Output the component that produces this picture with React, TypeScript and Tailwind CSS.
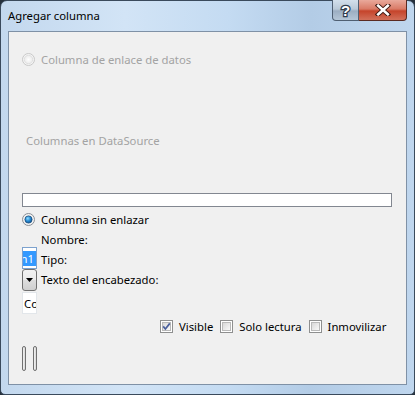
import React from "react";

const font = { fontFamily: '"Segoe UI", "Noto Sans", "Open Sans", sans-serif' };

function RadioDisabled() {
  return (
    <svg width="13" height="13" viewBox="0 0 13 13" className="shrink-0">
      <defs>
        <radialGradient id="rd" cx="0.5" cy="0.5" r="0.6">
          <stop offset="0" stopColor="#ffffff" />
          <stop offset="1" stopColor="#e6e6e6" />
        </radialGradient>
      </defs>
      <circle cx="6.5" cy="6.5" r="6" fill="#f4f4f4" stroke="#c8c8c8" />
      <circle cx="6.5" cy="6.5" r="4.2" fill="url(#rd)" stroke="#dcdcdc" strokeWidth="0.8" />
    </svg>
  );
}

function RadioChecked() {
  return (
    <svg width="13" height="13" viewBox="0 0 13 13" className="shrink-0">
      <defs>
        <radialGradient id="rc" cx="0.4" cy="0.35" r="0.7">
          <stop offset="0" stopColor="#8fdcff" />
          <stop offset="0.5" stopColor="#2b8fd6" />
          <stop offset="1" stopColor="#0c4d8c" />
        </radialGradient>
      </defs>
      <circle cx="6.5" cy="6.5" r="6" fill="#f2f2f2" stroke="#8a8f96" />
      <circle cx="6.5" cy="6.5" r="3.6" fill="url(#rc)" stroke="#1d4f7e" strokeWidth="0.8" />
    </svg>
  );
}

function Checkbox({ checked }: { checked?: boolean }) {
  return (
    <svg width="13" height="13" viewBox="0 0 13 13" className="shrink-0">
      <defs>
        <linearGradient id="cbg" x1="0" y1="0" x2="1" y2="1">
          <stop offset="0" stopColor="#d6d6d6" />
          <stop offset="1" stopColor="#fbfbfb" />
        </linearGradient>
      </defs>
      <rect x="0.5" y="0.5" width="12" height="12" fill="#ffffff" stroke="#8e8f8f" />
      <rect x="2.5" y="2.5" width="8" height="8" fill="url(#cbg)" stroke="#b9b9b9" />
      {checked && (
        <path d="M3.2 6.4 L5.4 9 L9.8 3.4" fill="none" stroke="#4a5f9c" strokeWidth="1.7" />
      )}
    </svg>
  );
}

export default function App() {
  return (
    <div className="w-[415px] h-[395px] bg-[#25303c] overflow-hidden" style={font}>
      <div className="w-[415px] h-[395px] flex flex-col rounded-t-[7px] rounded-b-[5px] border border-[#3a4a5c] bg-[linear-gradient(90deg,#c3d8ee_0%,#d2e4f6_30%,#c4dbf2_55%,#b3cce6_75%,#bfd6ee_100%)]">
        {/* Title bar */}
        <div className="h-[30px] flex shrink-0">
          <div className="pl-[7px] pt-[6px] text-[11.3px] text-black leading-[18px]">Agregar columna</div>
          <div className="flex-1" />
          <div className="flex mr-[7px] -mt-px h-[21px]">
            <div className="w-[27px] h-[21px] rounded-bl-[4px] border border-t-0 border-[#4f5f72] bg-[linear-gradient(180deg,#d3e0ec_0%,#bac9d8_45%,#9caec2_55%,#b5c6d7_100%)] flex items-center justify-center">
              <span
                className="text-white font-bold text-[15px] leading-none"
                style={{
                  fontFamily: '"Liberation Sans", Arial, sans-serif',
                  WebkitTextStroke: "2.5px #2f3d4e",
                  paintOrder: "stroke fill",
                }}
              >
                ?
              </span>
            </div>
            <div className="w-[48px] h-[21px] rounded-br-[4px] border border-t-0 border-l-0 border-[#5a2a22] bg-[linear-gradient(180deg,#e9a99b_0%,#d97a66_45%,#c5442b_55%,#d2705a_100%)] flex items-center justify-center">
              <svg width="16" height="12" viewBox="0 0 16 12">
                <path d="M3 1.5 L13 10.5 M13 1.5 L3 10.5" stroke="#3d1710" strokeWidth="4.4" strokeLinecap="square" />
                <path d="M3.2 1.7 L12.8 10.3 M12.8 1.7 L3.2 10.3" stroke="#ffffff" strokeWidth="2.6" strokeLinecap="square" />
              </svg>
            </div>
          </div>
        </div>
        {/* Client area */}
        <div className="mx-[7px] mb-[9px] flex-1 border border-[#7f91a6] bg-[#f0f0f0] text-[11.3px] leading-[15px]">
          <div className="pl-[13px] pt-[21px] flex flex-col">
            <div className="flex items-center h-[13px] gap-[6px]">
              <RadioDisabled />
              <span className="text-[#a3a3a3]">Columna de enlace de datos</span>
            </div>
            <div className="mt-[67px] ml-[4px] text-[#a3a3a3]">Columnas en DataSource</div>
            <div className="mt-[45px] w-[370px] h-[14px] border border-[#828790] bg-white" />
            <div className="mt-[5px] flex items-center h-[14px] gap-[6px]">
              <RadioChecked />
              <span className="text-black">Columna sin enlazar</span>
            </div>
            <div className="mt-[3px] flex">
              <div className="w-[15px] pt-[18px] flex flex-col">
                <div className="h-[22px] border border-[#7da2ce] bg-white overflow-hidden flex items-center justify-end">
                  <span className="bg-[#3399ff] text-white leading-[15px] whitespace-nowrap pr-[2px]">mn1</span>
                </div>
                <div className="h-[22px] rounded-[3px] border border-[#707070] bg-[linear-gradient(180deg,#f2f2f2_0%,#ebebeb_48%,#dddddd_52%,#cfcfcf_100%)] flex items-center justify-center">
                  <svg width="7" height="4" viewBox="0 0 7 4">
                    <path d="M0 0 L7 0 L3.5 4 Z" fill="#000" />
                  </svg>
                </div>
                <div className="mt-px h-[22px] border border-[#e2e6ea] bg-white overflow-hidden flex items-center">
                  <span className="pl-[1px] text-black whitespace-nowrap">Co</span>
                </div>
              </div>
              <div className="ml-[4px] flex flex-col text-black">
                <div className="h-[20px] flex items-center">Nombre:</div>
                <div className="h-[20px] flex items-center">Tipo:</div>
                <div className="h-[20px] flex items-center">Texto del encabezado:</div>
              </div>
            </div>
            <div className="mt-[6px] ml-[138px] flex items-center h-[13px] text-black">
              <Checkbox checked />
              <span className="ml-[6px]">Visible</span>
              <span className="ml-[7px]"><Checkbox /></span>
              <span className="ml-[6px]">Solo lectura</span>
              <span className="ml-[7px]"><Checkbox /></span>
              <span className="ml-[6px]">Inmovilizar</span>
            </div>
            <div className="mt-[13px] flex gap-[7px]">
              <div className="w-[4px] h-[25px] rounded-[2px] border border-[#707070] bg-[linear-gradient(90deg,#f2f2f2,#d8d8d8)]" />
              <div className="w-[4px] h-[25px] rounded-[2px] border border-[#707070] bg-[linear-gradient(90deg,#f2f2f2,#d8d8d8)]" />
            </div>
          </div>
        </div>
      </div>
    </div>
  );
}
